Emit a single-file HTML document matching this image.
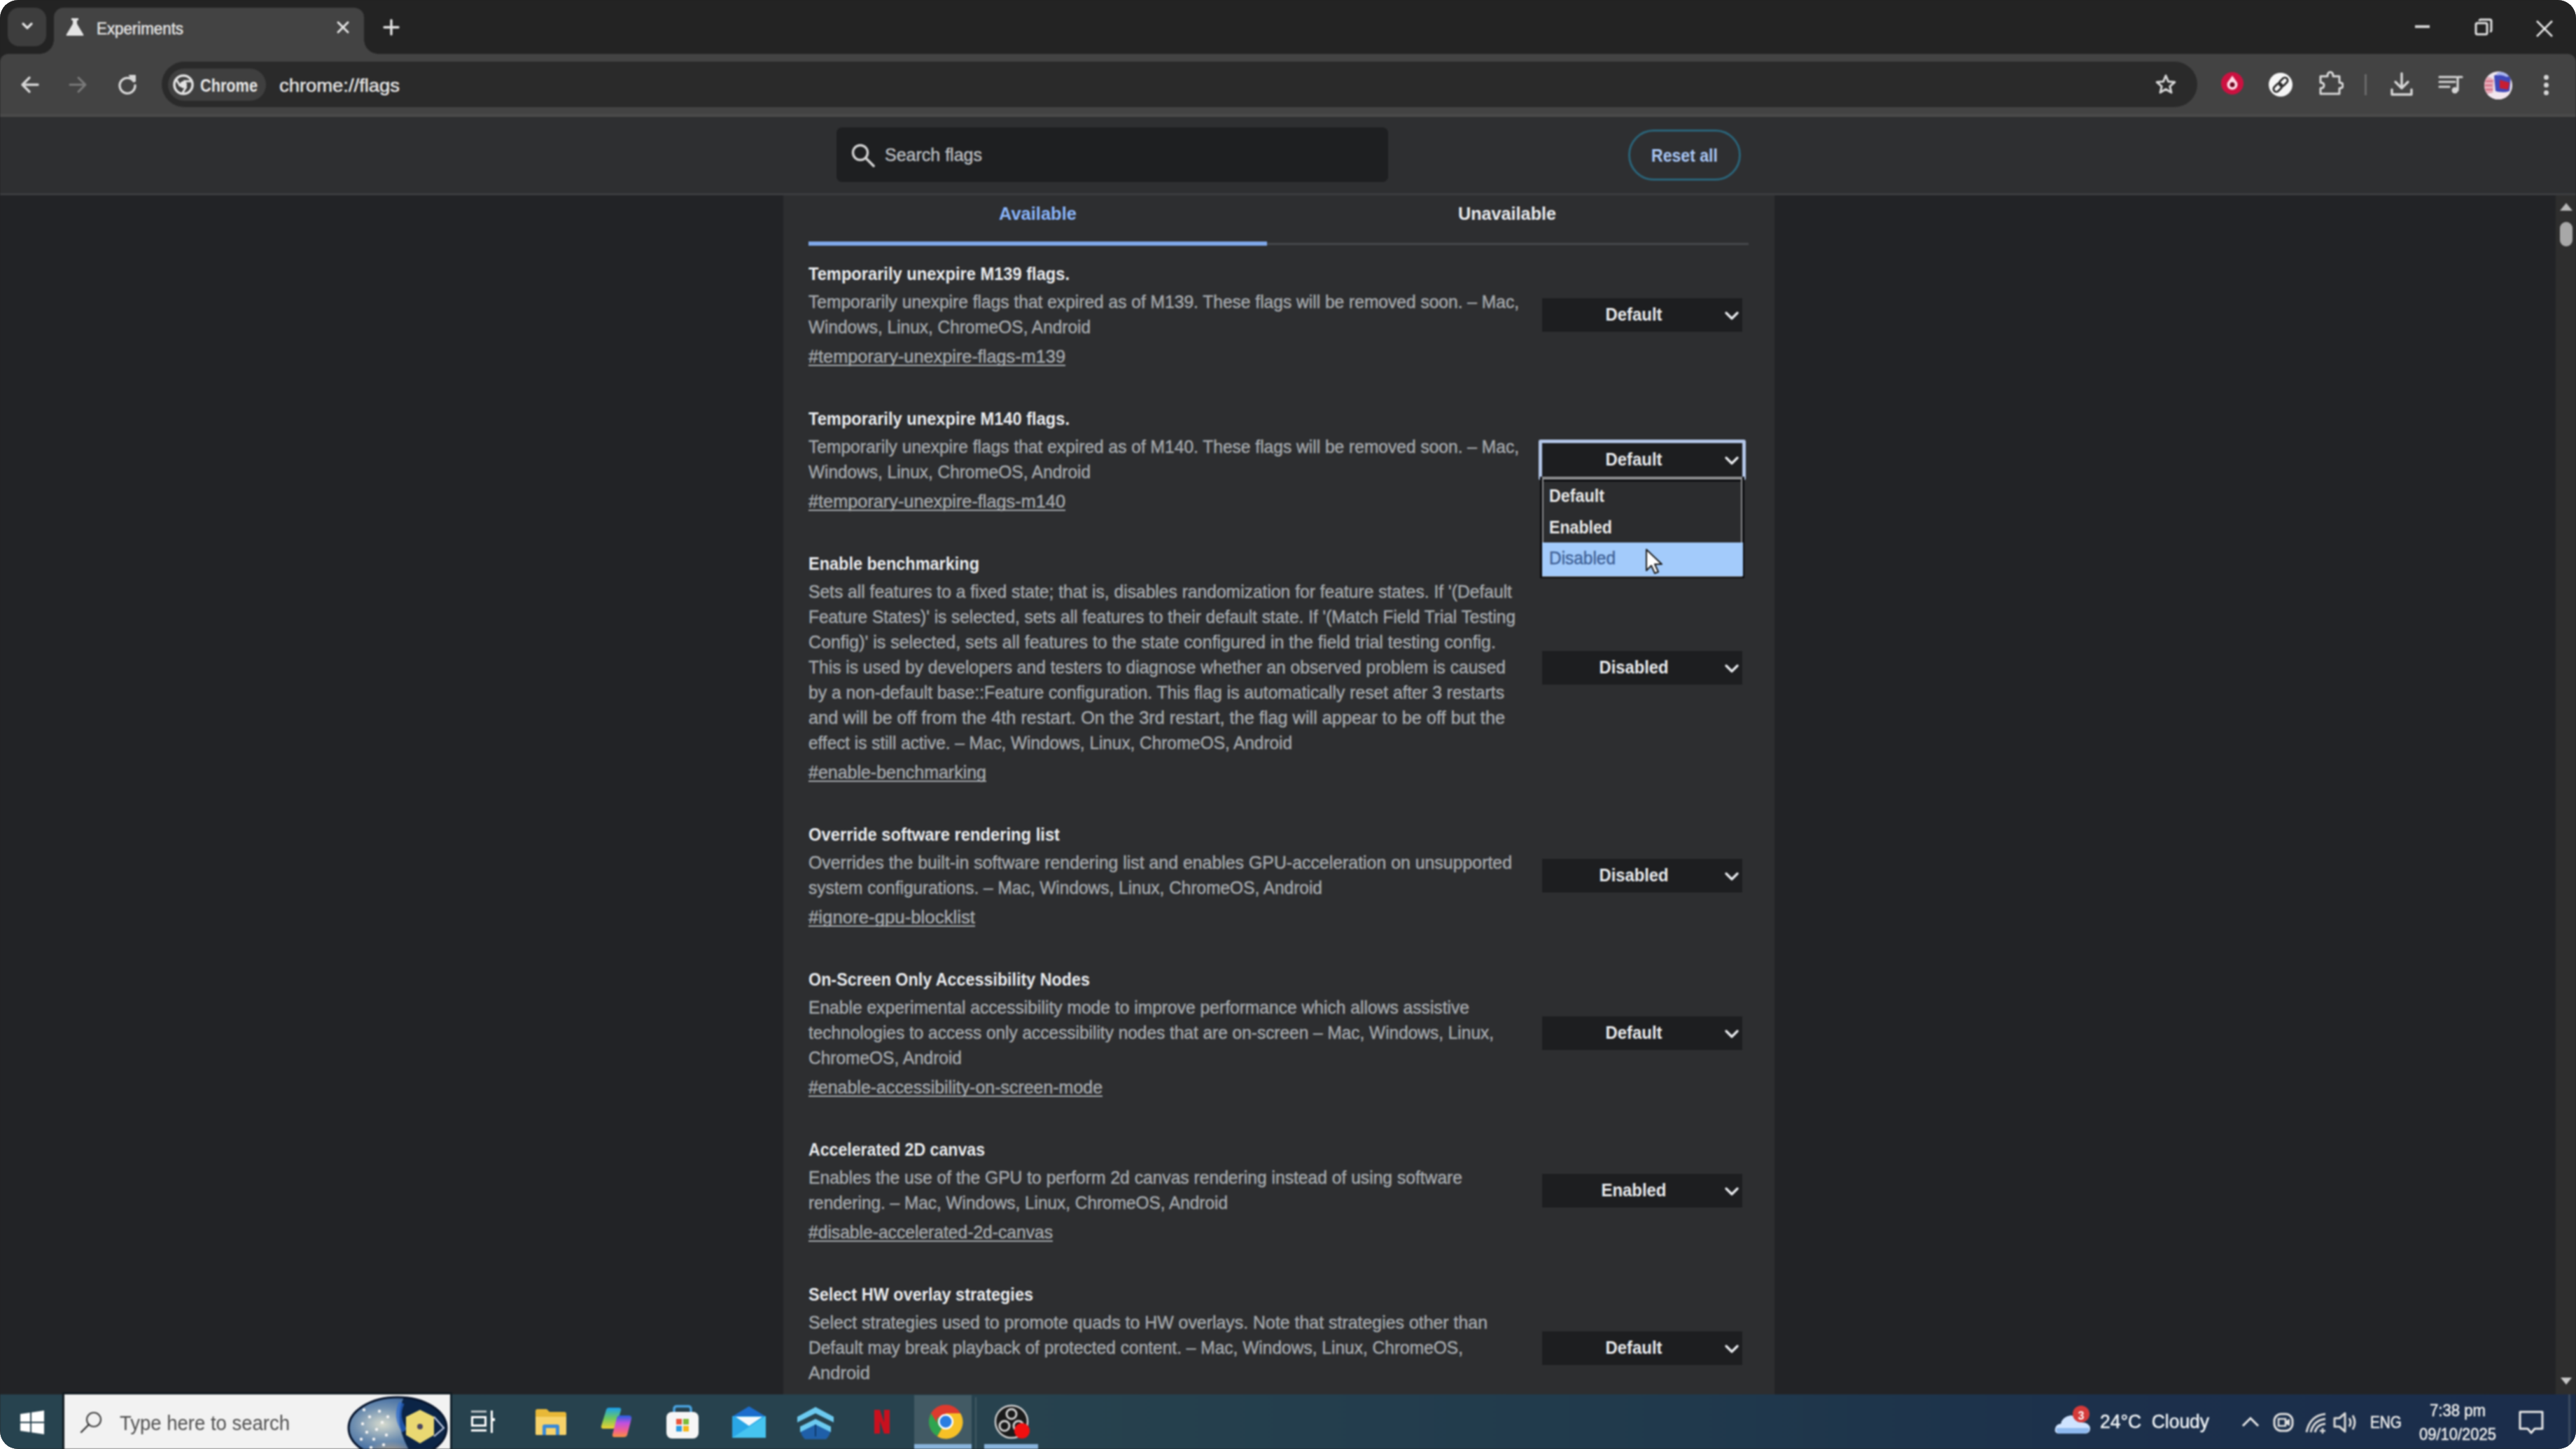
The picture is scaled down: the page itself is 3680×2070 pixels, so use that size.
<!DOCTYPE html>
<html><head><meta charset="utf-8"><title>Experiments</title>
<style>
html,body{margin:0;padding:0;background:#ffffff;width:3680px;height:2070px;overflow:hidden;}
#scr{position:absolute;left:0;top:0;width:3680px;height:2070px;overflow:hidden;border-radius:26px;background:#232323;}
#bl{position:absolute;left:0;top:0;width:3680px;height:2070px;filter:blur(1px);}
.b{position:absolute;}
.t{position:absolute;white-space:nowrap;font-family:"Liberation Sans",sans-serif;}
</style></head><body><div id="scr"><div id="bl">
<div class="b" style="left:0px;top:0px;width:3680px;height:92px;background:#232323;"></div>
<div class="b" style="left:11px;top:11px;width:55px;height:55px;background:#3d3d3d;border-radius:16px;"></div>
<svg class="b" style="left:24px;top:22px;" width="30" height="30" viewBox="0 0 30 30"><path d="M9 12 L15 18 L21 12" fill="none" stroke="#e3e3e3" stroke-width="3.2" stroke-linecap="round" stroke-linejoin="round"/></svg>
<div class="b" style="left:77px;top:11px;width:443px;height:69px;background:#434343;border-radius:14px 14px 0 0;"></div>
<div class="b" style="left:57px;top:57px;width:20px;height:20px;background:radial-gradient(circle at 0 0, transparent 19.5px, #434343 20px);"></div>
<div class="b" style="left:520px;top:57px;width:20px;height:20px;background:radial-gradient(circle at 100% 0, transparent 19.5px, #434343 20px);"></div>
<svg class="b" style="left:93px;top:24px;" width="28" height="28" viewBox="0 0 28 28"><path d="M9 2 H19 V5 H17 V10 L26 25 Q27 27 25 27 H3 Q1 27 2 25 L11 10 V5 H9 Z" fill="#e3e3e3"/></svg>
<div class="t " style="left:138px;top:28.23px;font-size:23px;line-height:27.6px;font-weight:400;color:#e3e3e3;transform:scaleX(0.9703);transform-origin:left top;-webkit-text-stroke:0.5px currentColor;">Experiments</div>
<svg class="b" style="left:480px;top:29px;" width="20" height="20" viewBox="0 0 20 20"><path d="M3 3 L17 17 M17 3 L3 17" stroke="#e3e3e3" stroke-width="3" stroke-linecap="round"/></svg>
<svg class="b" style="left:547px;top:27px;" width="24" height="24" viewBox="0 0 24 24"><path d="M12 2 V22 M2 12 H22" stroke="#e3e3e3" stroke-width="3.4" stroke-linecap="round"/></svg>
<div class="b" style="left:3450px;top:36px;width:21px;height:4px;background:#cfcfcf;"></div>
<svg class="b" style="left:3534px;top:25px;" width="28" height="28" viewBox="0 0 28 28"><rect x="3" y="8" width="16" height="16" rx="2" fill="none" stroke="#e0e0e0" stroke-width="3"/><path d="M8 5 Q8 3 10 3 H23 Q25 3 25 5 V18 Q25 20 23 20" fill="none" stroke="#e0e0e0" stroke-width="3"/></svg>
<svg class="b" style="left:3622px;top:28px;" width="26" height="26" viewBox="0 0 26 26"><path d="M2 2 L24 24 M24 2 L2 24" stroke="#e6e6e6" stroke-width="2.6"/></svg>
<div class="b" style="left:0px;top:77px;width:3680px;height:88px;background:#434343;border-radius:12px 12px 0 0;"></div>
<div class="b" style="left:0px;top:163px;width:3680px;height:4px;background:#4a4a4a;"></div>
<svg class="b" style="left:28px;top:106px;" width="30" height="30" viewBox="0 0 30 30"><path d="M26 15 H5 M14 5 L4 15 L14 25" fill="none" stroke="#d6d6d6" stroke-width="3.4" stroke-linecap="round" stroke-linejoin="round"/></svg>
<svg class="b" style="left:96px;top:106px;" width="30" height="30" viewBox="0 0 30 30"><path d="M4 15 H25 M16 5 L26 15 L16 25" fill="none" stroke="#7a7a7a" stroke-width="3" stroke-linecap="round" stroke-linejoin="round"/></svg>
<svg class="b" style="left:166px;top:105px;" width="32" height="32" viewBox="0 0 32 32"><path d="M25 11 A11 11 0 1 0 27 17" fill="none" stroke="#d6d6d6" stroke-width="3.4" stroke-linecap="round"/><path d="M19 3 H27 V11 Z" fill="#d6d6d6" stroke="#d6d6d6" stroke-width="2" stroke-linejoin="round"/></svg>
<div class="b" style="left:231px;top:88px;width:2908px;height:65px;background:#2a2a2a;border-radius:33px;"></div>
<div class="b" style="left:240px;top:98px;width:140px;height:46px;background:#3f3f3f;border-radius:23px;"></div>
<svg class="b" style="left:246px;top:105px;" width="32" height="32" viewBox="0 0 32 32"><circle cx="16" cy="16" r="13" fill="none" stroke="#e3e3e3" stroke-width="3.5"/><circle cx="16" cy="16" r="5" fill="#e3e3e3"/><path d="M16 11 H28 M11.7 18.5 L5.5 8 M20.3 18.5 L14 29" stroke="#e3e3e3" stroke-width="3"/></svg>
<div class="t " style="left:286px;top:107.34px;font-size:25px;line-height:30.0px;font-weight:700;color:#e8e8e8;transform:scaleX(0.8677);transform-origin:left top;">Chrome</div>
<div class="t " style="left:399px;top:107.34px;font-size:25px;line-height:30.0px;font-weight:400;color:#e3e3e3;transform:scaleX(1.0955);transform-origin:left top;-webkit-text-stroke:0.5px currentColor;">chrome://flags</div>
<svg class="b" style="left:3078px;top:105px;" width="32" height="32" viewBox="0 0 32 32"><path d="M16 3 L19.6 11.6 L28.8 12.3 L21.8 18.3 L24 27.3 L16 22.4 L8 27.3 L10.2 18.3 L3.2 12.3 L12.4 11.6 Z" fill="none" stroke="#d6d6d6" stroke-width="3" stroke-linejoin="round"/></svg>
<svg class="b" style="left:3172px;top:102px;" width="34" height="34" viewBox="0 0 34 34"><circle cx="17" cy="17" r="16" fill="#cc1140"/><path d="M17 6 L24 16 A7.5 7.5 0 1 1 10 16 Z" fill="#ffd8e4"/><circle cx="17" cy="19" r="3.5" fill="#6a0a22"/></svg>
<svg class="b" style="left:3240px;top:103px;" width="36" height="36" viewBox="0 0 36 36"><circle cx="18" cy="18" r="17" fill="#f6f6f6"/><rect x="7" y="18" width="14" height="8" rx="4" transform="rotate(-45 14 22)" fill="none" stroke="#2a2a2a" stroke-width="2.8"/><rect x="15" y="10" width="14" height="8" rx="4" transform="rotate(-45 22 14)" fill="none" stroke="#2a2a2a" stroke-width="2.8"/></svg>
<svg class="b" style="left:3310px;top:100px;" width="38" height="38" viewBox="0 0 38 38"><path d="M5 9 H15 Q15 3 19 3 Q23 3 23 9 H32 V18 Q37 18 37 22 Q37 26 32 26 V34 H5 V26 Q10 26 10 22 Q10 18 5 18 Z" fill="none" stroke="#d8d8d8" stroke-width="3" stroke-linejoin="round"/></svg>
<div class="b" style="left:3378px;top:106px;width:3px;height:30px;background:#6a6a6a;"></div>
<svg class="b" style="left:3413px;top:102px;" width="36" height="38" viewBox="0 0 36 38"><path d="M18 3 V23 M9 15 L18 24 L27 15" fill="none" stroke="#d6d6d6" stroke-width="3.4" stroke-linecap="round" stroke-linejoin="round"/><path d="M4 26 V33 H32 V26" fill="none" stroke="#d6d6d6" stroke-width="3.4" stroke-linecap="round" stroke-linejoin="round"/></svg>
<svg class="b" style="left:3483px;top:104px;" width="36" height="34" viewBox="0 0 36 34"><path d="M2 6 H26 M2 13 H24 M2 20 H16" stroke="#d6d6d6" stroke-width="3.2" stroke-linecap="round"/><path d="M28 6 H34 M28 6 V25" stroke="#d6d6d6" stroke-width="3.2" stroke-linecap="round"/><circle cx="24" cy="25" r="4.5" fill="#d6d6d6"/></svg>
<svg class="b" style="left:3547px;top:100px;" width="44" height="44" viewBox="0 0 44 44"><defs><clipPath id="av"><circle cx="22" cy="22" r="20"/></clipPath></defs><g clip-path="url(#av)"><rect width="44" height="44" fill="#ece4ec"/><path d="M0 10 Q8 8 16 14 L14 34 Q6 36 0 34 Z" fill="#e6aab8"/><path d="M4 16 H14 M3 22 H13 M4 28 H14" stroke="#d06a80" stroke-width="2"/><path d="M16 8 Q28 2 40 10 L38 30 Q28 34 18 30 Z" fill="#4048b8"/><path d="M24 14 L38 18 L36 28 L24 26 Z" fill="#c81e32"/><path d="M20 4 Q30 0 40 8 L34 10 Q26 6 20 8 Z" fill="#a8b4f0"/><path d="M0 36 Q22 28 44 34 V44 H0 Z" fill="#f2e6ee"/></g></svg>
<div class="b" style="left:3634px;top:107px;width:7px;height:7px;border-radius:50%;background:#d6d6d6;"></div>
<div class="b" style="left:3634px;top:118px;width:7px;height:7px;border-radius:50%;background:#d6d6d6;"></div>
<div class="b" style="left:3634px;top:129px;width:7px;height:7px;border-radius:50%;background:#d6d6d6;"></div>
<div class="b" style="left:0px;top:167px;width:3680px;height:1825px;background:#222326;"></div>
<div class="b" style="left:0px;top:167px;width:3680px;height:110px;background:#2e2f31;"></div>
<div class="b" style="left:0px;top:276px;width:3680px;height:3px;background:#3b3c3f;"></div>
<div class="b" style="left:1119px;top:279px;width:1416px;height:1713px;background:#2d2e30;"></div>
<div class="b" style="left:1195px;top:182px;width:788px;height:78px;background:#1e1f21;border-radius:8px;"></div>
<svg class="b" style="left:1214px;top:203px;" width="40" height="40" viewBox="0 0 40 40"><circle cx="15" cy="15" r="10.5" fill="none" stroke="#d0d0d0" stroke-width="3.4"/><path d="M23 23 L34 34" stroke="#d0d0d0" stroke-width="3.8" stroke-linecap="round"/></svg>
<div class="t " style="left:1264px;top:207.42px;font-size:24.92px;line-height:29.9px;font-weight:400;color:#b8bbbf;transform:scaleX(1.0036);transform-origin:left top;-webkit-text-stroke:0.5px currentColor;">Search flags</div>
<div class="b" style="left:2326px;top:185px;width:161px;height:73px;background:transparent;border:3px solid #2b6479;border-radius:37px;box-sizing:border-box;"></div>
<div class="t " style="left:2359px;top:208.42px;font-size:24.92px;line-height:29.9px;font-weight:700;color:#a9c6f4;transform:scaleX(0.9268);transform-origin:left top;">Reset all</div>
<div class="t " style="left:1427px;top:291.42px;font-size:24.92px;line-height:29.9px;font-weight:700;color:#8ab4f8;transform:scaleX(1.0230);transform-origin:left top;">Available</div>
<div class="t " style="left:2083px;top:291.42px;font-size:24.92px;line-height:29.9px;font-weight:700;color:#e8eaed;transform:scaleX(1.0116);transform-origin:left top;">Unavailable</div>
<div class="b" style="left:1155px;top:347px;width:1343px;height:3px;background:#45474a;"></div>
<div class="b" style="left:1155px;top:345px;width:655px;height:6px;background:#7fa8ea;"></div>
<div class="b" style="left:3651px;top:279px;width:29px;height:1713px;background:#2e2e2e;"></div>
<svg class="b" style="left:3656px;top:289px;" width="20" height="13" viewBox="0 0 20 13"><path d="M1 12 L10 1 L19 12 Z" fill="#b8b8b8"/></svg>
<div class="b" style="left:3657px;top:317px;width:18px;height:35px;background:#a8a8a8;border-radius:10px;"></div>
<svg class="b" style="left:3656px;top:1966px;" width="20" height="16" viewBox="0 0 20 16"><path d="M2 2 L10 12 L18 2 Z" fill="#c8c8c8"/></svg>
<div class="t " style="left:1155px;top:377.42px;font-size:24.92px;line-height:29.9px;font-weight:700;color:#e8eaed;transform:scaleX(0.9500);transform-origin:left top;">Temporarily unexpire M139 flags.</div>
<div class="t " style="left:1155px;top:417.42px;font-size:24.92px;line-height:29.9px;font-weight:400;color:#a3a7ab;transform:scaleX(0.9859);transform-origin:left top;-webkit-text-stroke:0.5px currentColor;">Temporarily unexpire flags that expired as of M139. These flags will be removed soon. – Mac,</div>
<div class="t " style="left:1155px;top:453.42px;font-size:24.92px;line-height:29.9px;font-weight:400;color:#a3a7ab;transform:scaleX(0.9802);transform-origin:left top;-webkit-text-stroke:0.5px currentColor;">Windows, Linux, ChromeOS, Android</div>
<div class="t " style="left:1155px;top:495.42px;font-size:24.92px;line-height:29.9px;font-weight:400;color:#a3a7ab;transform:scaleX(1.0157);transform-origin:left top;-webkit-text-stroke:0.5px currentColor;">#temporary-unexpire-flags-m139</div>
<div class="b" style="left:1155px;top:521px;width:367px;height:2px;background:#a3a7ab;"></div>
<div class="b" style="left:2203px;top:426px;width:286px;height:48px;background:#1d1e20;"></div>
<div class="t " style="left:1334px;width:2000px;text-align:center;top:435.42px;font-size:24.92px;line-height:29.9px;font-weight:700;color:#e8eaed;transform:scaleX(0.9595);transform-origin:center top;">Default</div>
<svg class="b" style="left:2463px;top:443px;" width="22" height="16" viewBox="0 0 22 16"><path d="M3 4 L11 12 L19 4" fill="none" stroke="#e8eaed" stroke-width="3.4" stroke-linecap="round" stroke-linejoin="round"/></svg>
<div class="t " style="left:1155px;top:584.42px;font-size:24.92px;line-height:29.9px;font-weight:700;color:#e8eaed;transform:scaleX(0.9500);transform-origin:left top;">Temporarily unexpire M140 flags.</div>
<div class="t " style="left:1155px;top:624.42px;font-size:24.92px;line-height:29.9px;font-weight:400;color:#a3a7ab;transform:scaleX(0.9859);transform-origin:left top;-webkit-text-stroke:0.5px currentColor;">Temporarily unexpire flags that expired as of M140. These flags will be removed soon. – Mac,</div>
<div class="t " style="left:1155px;top:660.42px;font-size:24.92px;line-height:29.9px;font-weight:400;color:#a3a7ab;transform:scaleX(0.9802);transform-origin:left top;-webkit-text-stroke:0.5px currentColor;">Windows, Linux, ChromeOS, Android</div>
<div class="t " style="left:1155px;top:702.42px;font-size:24.92px;line-height:29.9px;font-weight:400;color:#a3a7ab;transform:scaleX(1.0157);transform-origin:left top;-webkit-text-stroke:0.5px currentColor;">#temporary-unexpire-flags-m140</div>
<div class="b" style="left:1155px;top:728px;width:367px;height:2px;background:#a3a7ab;"></div>
<div class="b" style="left:2198px;top:628px;width:296px;height:58px;background:#b3c6e8;border-radius:3px;"></div>
<div class="b" style="left:2203px;top:633px;width:286px;height:48px;background:#1d1e20;"></div>
<div class="t " style="left:1334px;width:2000px;text-align:center;top:642.42px;font-size:24.92px;line-height:29.9px;font-weight:700;color:#e8eaed;transform:scaleX(0.9595);transform-origin:center top;">Default</div>
<svg class="b" style="left:2463px;top:650px;" width="22" height="16" viewBox="0 0 22 16"><path d="M3 4 L11 12 L19 4" fill="none" stroke="#e8eaed" stroke-width="3.4" stroke-linecap="round" stroke-linejoin="round"/></svg>
<div class="t " style="left:1155px;top:791.42px;font-size:24.92px;line-height:29.9px;font-weight:700;color:#e8eaed;transform:scaleX(0.9427);transform-origin:left top;">Enable benchmarking</div>
<div class="t " style="left:1155px;top:831.42px;font-size:24.92px;line-height:29.9px;font-weight:400;color:#a3a7ab;transform:scaleX(0.9884);transform-origin:left top;-webkit-text-stroke:0.5px currentColor;">Sets all features to a fixed state; that is, disables randomization for feature states. If '(Default</div>
<div class="t " style="left:1155px;top:867.42px;font-size:24.92px;line-height:29.9px;font-weight:400;color:#a3a7ab;transform:scaleX(0.9799);transform-origin:left top;-webkit-text-stroke:0.5px currentColor;">Feature States)' is selected, sets all features to their default state. If '(Match Field Trial Testing</div>
<div class="t " style="left:1155px;top:903.42px;font-size:24.92px;line-height:29.9px;font-weight:400;color:#a3a7ab;transform:scaleX(1.0026);transform-origin:left top;-webkit-text-stroke:0.5px currentColor;">Config)' is selected, sets all features to the state configured in the field trial testing config.</div>
<div class="t " style="left:1155px;top:939.42px;font-size:24.92px;line-height:29.9px;font-weight:400;color:#a3a7ab;transform:scaleX(0.9868);transform-origin:left top;-webkit-text-stroke:0.5px currentColor;">This is used by developers and testers to diagnose whether an observed problem is caused</div>
<div class="t " style="left:1155px;top:975.42px;font-size:24.92px;line-height:29.9px;font-weight:400;color:#a3a7ab;transform:scaleX(0.9908);transform-origin:left top;-webkit-text-stroke:0.5px currentColor;">by a non-default base::Feature configuration. This flag is automatically reset after 3 restarts</div>
<div class="t " style="left:1155px;top:1011.42px;font-size:24.92px;line-height:29.9px;font-weight:400;color:#a3a7ab;transform:scaleX(1.0161);transform-origin:left top;-webkit-text-stroke:0.5px currentColor;">and will be off from the 4th restart. On the 3rd restart, the flag will appear to be off but the</div>
<div class="t " style="left:1155px;top:1047.42px;font-size:24.92px;line-height:29.9px;font-weight:400;color:#a3a7ab;transform:scaleX(0.9775);transform-origin:left top;-webkit-text-stroke:0.5px currentColor;">effect is still active. – Mac, Windows, Linux, ChromeOS, Android</div>
<div class="t " style="left:1155px;top:1089.42px;font-size:24.92px;line-height:29.9px;font-weight:400;color:#a3a7ab;transform:scaleX(1.0024);transform-origin:left top;-webkit-text-stroke:0.5px currentColor;">#enable-benchmarking</div>
<div class="b" style="left:1155px;top:1115px;width:254px;height:2px;background:#a3a7ab;"></div>
<div class="b" style="left:2203px;top:930px;width:286px;height:48px;background:#1d1e20;"></div>
<div class="t " style="left:1334px;width:2000px;text-align:center;top:939.42px;font-size:24.92px;line-height:29.9px;font-weight:700;color:#e8eaed;transform:scaleX(0.9536);transform-origin:center top;">Disabled</div>
<svg class="b" style="left:2463px;top:947px;" width="22" height="16" viewBox="0 0 22 16"><path d="M3 4 L11 12 L19 4" fill="none" stroke="#e8eaed" stroke-width="3.4" stroke-linecap="round" stroke-linejoin="round"/></svg>
<div class="t " style="left:1155px;top:1178.42px;font-size:24.92px;line-height:29.9px;font-weight:700;color:#e8eaed;transform:scaleX(0.9536);transform-origin:left top;">Override software rendering list</div>
<div class="t " style="left:1155px;top:1218.42px;font-size:24.92px;line-height:29.9px;font-weight:400;color:#a3a7ab;transform:scaleX(0.9985);transform-origin:left top;-webkit-text-stroke:0.5px currentColor;">Overrides the built-in software rendering list and enables GPU-acceleration on unsupported</div>
<div class="t " style="left:1155px;top:1254.42px;font-size:24.92px;line-height:29.9px;font-weight:400;color:#a3a7ab;transform:scaleX(0.9819);transform-origin:left top;-webkit-text-stroke:0.5px currentColor;">system configurations. – Mac, Windows, Linux, ChromeOS, Android</div>
<div class="t " style="left:1155px;top:1296.42px;font-size:24.92px;line-height:29.9px;font-weight:400;color:#a3a7ab;transform:scaleX(1.0356);transform-origin:left top;-webkit-text-stroke:0.5px currentColor;">#ignore-gpu-blocklist</div>
<div class="b" style="left:1155px;top:1322px;width:238px;height:2px;background:#a3a7ab;"></div>
<div class="b" style="left:2203px;top:1227px;width:286px;height:48px;background:#1d1e20;"></div>
<div class="t " style="left:1334px;width:2000px;text-align:center;top:1236.42px;font-size:24.92px;line-height:29.9px;font-weight:700;color:#e8eaed;transform:scaleX(0.9536);transform-origin:center top;">Disabled</div>
<svg class="b" style="left:2463px;top:1244px;" width="22" height="16" viewBox="0 0 22 16"><path d="M3 4 L11 12 L19 4" fill="none" stroke="#e8eaed" stroke-width="3.4" stroke-linecap="round" stroke-linejoin="round"/></svg>
<div class="t " style="left:1155px;top:1385.42px;font-size:24.92px;line-height:29.9px;font-weight:700;color:#e8eaed;transform:scaleX(0.9358);transform-origin:left top;">On-Screen Only Accessibility Nodes</div>
<div class="t " style="left:1155px;top:1425.42px;font-size:24.92px;line-height:29.9px;font-weight:400;color:#a3a7ab;transform:scaleX(0.9883);transform-origin:left top;-webkit-text-stroke:0.5px currentColor;">Enable experimental accessibility mode to improve performance which allows assistive</div>
<div class="t " style="left:1155px;top:1461.42px;font-size:24.92px;line-height:29.9px;font-weight:400;color:#a3a7ab;transform:scaleX(0.9808);transform-origin:left top;-webkit-text-stroke:0.5px currentColor;">technologies to access only accessibility nodes that are on-screen – Mac, Windows, Linux,</div>
<div class="t " style="left:1155px;top:1497.42px;font-size:24.92px;line-height:29.9px;font-weight:400;color:#a3a7ab;transform:scaleX(0.9825);transform-origin:left top;-webkit-text-stroke:0.5px currentColor;">ChromeOS, Android</div>
<div class="t " style="left:1155px;top:1539.42px;font-size:24.92px;line-height:29.9px;font-weight:400;color:#a3a7ab;transform:scaleX(1.0013);transform-origin:left top;-webkit-text-stroke:0.5px currentColor;">#enable-accessibility-on-screen-mode</div>
<div class="b" style="left:1155px;top:1565px;width:420px;height:2px;background:#a3a7ab;"></div>
<div class="b" style="left:2203px;top:1452px;width:286px;height:48px;background:#1d1e20;"></div>
<div class="t " style="left:1334px;width:2000px;text-align:center;top:1461.42px;font-size:24.92px;line-height:29.9px;font-weight:700;color:#e8eaed;transform:scaleX(0.9595);transform-origin:center top;">Default</div>
<svg class="b" style="left:2463px;top:1469px;" width="22" height="16" viewBox="0 0 22 16"><path d="M3 4 L11 12 L19 4" fill="none" stroke="#e8eaed" stroke-width="3.4" stroke-linecap="round" stroke-linejoin="round"/></svg>
<div class="t " style="left:1155px;top:1628.42px;font-size:24.92px;line-height:29.9px;font-weight:700;color:#e8eaed;transform:scaleX(0.9286);transform-origin:left top;">Accelerated 2D canvas</div>
<div class="t " style="left:1155px;top:1668.42px;font-size:24.92px;line-height:29.9px;font-weight:400;color:#a3a7ab;transform:scaleX(0.9892);transform-origin:left top;-webkit-text-stroke:0.5px currentColor;">Enables the use of the GPU to perform 2d canvas rendering instead of using software</div>
<div class="t " style="left:1155px;top:1704.42px;font-size:24.92px;line-height:29.9px;font-weight:400;color:#a3a7ab;transform:scaleX(0.9790);transform-origin:left top;-webkit-text-stroke:0.5px currentColor;">rendering. – Mac, Windows, Linux, ChromeOS, Android</div>
<div class="t " style="left:1155px;top:1746.42px;font-size:24.92px;line-height:29.9px;font-weight:400;color:#a3a7ab;transform:scaleX(0.9885);transform-origin:left top;-webkit-text-stroke:0.5px currentColor;">#disable-accelerated-2d-canvas</div>
<div class="b" style="left:1155px;top:1772px;width:349px;height:2px;background:#a3a7ab;"></div>
<div class="b" style="left:2203px;top:1677px;width:286px;height:48px;background:#1d1e20;"></div>
<div class="t " style="left:1334px;width:2000px;text-align:center;top:1686.42px;font-size:24.92px;line-height:29.9px;font-weight:700;color:#e8eaed;transform:scaleX(0.9598);transform-origin:center top;">Enabled</div>
<svg class="b" style="left:2463px;top:1694px;" width="22" height="16" viewBox="0 0 22 16"><path d="M3 4 L11 12 L19 4" fill="none" stroke="#e8eaed" stroke-width="3.4" stroke-linecap="round" stroke-linejoin="round"/></svg>
<div class="t " style="left:1155px;top:1835.42px;font-size:24.92px;line-height:29.9px;font-weight:700;color:#e8eaed;transform:scaleX(0.9426);transform-origin:left top;">Select HW overlay strategies</div>
<div class="t " style="left:1155px;top:1875.42px;font-size:24.92px;line-height:29.9px;font-weight:400;color:#a3a7ab;transform:scaleX(0.9995);transform-origin:left top;-webkit-text-stroke:0.5px currentColor;">Select strategies used to promote quads to HW overlays. Note that strategies other than</div>
<div class="t " style="left:1155px;top:1911.42px;font-size:24.92px;line-height:29.9px;font-weight:400;color:#a3a7ab;transform:scaleX(0.9846);transform-origin:left top;-webkit-text-stroke:0.5px currentColor;">Default may break playback of protected content. – Mac, Windows, Linux, ChromeOS,</div>
<div class="t " style="left:1155px;top:1947.42px;font-size:24.92px;line-height:29.9px;font-weight:400;color:#a3a7ab;transform:scaleX(1.0249);transform-origin:left top;-webkit-text-stroke:0.5px currentColor;">Android</div>
<div class="t " style="left:1155px;top:1989.42px;font-size:24.92px;line-height:29.9px;font-weight:400;color:#a3a7ab;transform:scaleX(1.1168);transform-origin:left top;-webkit-text-stroke:0.5px currentColor;">#overlay-strategies</div>
<div class="b" style="left:1155px;top:2015px;width:235px;height:2px;background:#a3a7ab;"></div>
<div class="b" style="left:2203px;top:1902px;width:286px;height:48px;background:#1d1e20;"></div>
<div class="t " style="left:1334px;width:2000px;text-align:center;top:1911.42px;font-size:24.92px;line-height:29.9px;font-weight:700;color:#e8eaed;transform:scaleX(0.9595);transform-origin:center top;">Default</div>
<svg class="b" style="left:2463px;top:1919px;" width="22" height="16" viewBox="0 0 22 16"><path d="M3 4 L11 12 L19 4" fill="none" stroke="#e8eaed" stroke-width="3.4" stroke-linecap="round" stroke-linejoin="round"/></svg>
<div class="b" style="left:2200px;top:681px;width:292px;height:145px;background:#0c0d10;"></div>
<div class="b" style="left:2203px;top:681px;width:286px;height:143px;background:#2b2c2e;border:2px solid #8e8f91;border-top:4px solid #8e8f91;box-sizing:border-box;"></div>
<div class="b" style="left:2205px;top:685px;width:282px;height:3px;background:#0c0d10;"></div>
<div class="t " style="left:2213px;top:693.39px;font-size:26px;line-height:31.2px;font-weight:700;color:#e8e8e8;transform:scaleX(0.8965);transform-origin:left top;">Default</div>
<div class="t " style="left:2213px;top:738.39px;font-size:26px;line-height:31.2px;font-weight:700;color:#e8e8e8;transform:scaleX(0.8899);transform-origin:left top;">Enabled</div>
<div class="b" style="left:2203px;top:775px;width:287px;height:48px;background:#a3cbfb;"></div>
<div class="t " style="left:2213px;top:782.39px;font-size:26px;line-height:31.2px;font-weight:400;color:#42649a;transform:scaleX(0.9390);transform-origin:left top;-webkit-text-stroke:0.5px currentColor;">Disabled</div>
<svg class="b" style="left:2348px;top:782px;" width="30" height="42" viewBox="0 0 30 42"><path d="M4 3 V33 L11 26 L16 37 L21 35 L16 24 H26 Z" fill="#ffffff" stroke="#1a1a1a" stroke-width="2" stroke-linejoin="round"/></svg>
<div class="b" style="left:0px;top:1992px;width:3680px;height:78px;background:linear-gradient(90deg,#27434f 0%,#27424e 40%,#20394c 66%,#1c304b 82%,#1b2d4b 100%);"></div>
<svg class="b" style="left:28px;top:2015px;" width="36" height="34" viewBox="0 0 36 34"><path d="M1 5 L15 3 V16 H1 Z M17 2.7 L35 0 V16 H17 Z M1 18 H15 V31 L1 29 Z M17 18 H35 V34 L17 31.3 Z" fill="#ffffff"/></svg>
<div class="b" style="left:89px;top:1989px;width:557px;height:81px;background:#111a20;"></div>
<div class="b" style="left:92px;top:1992px;width:551px;height:78px;background:#f2f2f2;"></div>
<svg class="b" style="left:113px;top:2014px;" width="36" height="36" viewBox="0 0 36 36"><circle cx="21" cy="14" r="10" fill="none" stroke="#444444" stroke-width="2.2"/><path d="M14 21 L3 32" stroke="#333333" stroke-width="2.4" stroke-linecap="round"/></svg>
<div class="t " style="left:171px;top:2015.55px;font-size:29px;line-height:34.8px;font-weight:400;color:#505050;transform:scaleX(0.9480);transform-origin:left top;">Type here to search</div>
<svg class="b" style="left:494px;top:1994px;" width="150" height="76" viewBox="0 0 150 76"><defs><radialGradient id="gx" cx="0.35" cy="0.45" r="0.6"><stop offset="0" stop-color="#d8dccf"/><stop offset="0.45" stop-color="#6f8fb0"/><stop offset="1" stop-color="#1d4f96"/></radialGradient><radialGradient id="go" cx="0.5" cy="1" r="0.5"><stop offset="0" stop-color="#f6c07a"/><stop offset="1" stop-color="#f6c07a" stop-opacity="0"/></radialGradient><clipPath id="ec"><ellipse cx="74" cy="46" rx="70" ry="44"/></clipPath></defs><g clip-path="url(#ec)"><rect width="150" height="90" fill="url(#gx)"/><rect x="20" y="40" width="90" height="50" fill="url(#go)"/><path d="M84 0 Q64 40 98 90 H150 V0 Z" fill="#0b2446"/><path d="M80 10 Q70 30 84 50" stroke="#2a6ad0" stroke-width="8" fill="none" opacity="0.7"/><circle cx="26" cy="20" r="2.2" fill="#f4f4f4"/><circle cx="34" cy="30" r="2.2" fill="#f4f4f4"/><circle cx="24" cy="40" r="2.2" fill="#f4f4f4"/><circle cx="30" cy="52" r="2.2" fill="#f4f4f4"/><circle cx="40" cy="62" r="2.2" fill="#f4f4f4"/><circle cx="22" cy="62" r="2.2" fill="#f4f4f4"/><circle cx="48" cy="22" r="2.2" fill="#f4f4f4"/><circle cx="52" cy="38" r="2.2" fill="#f4f4f4"/><circle cx="44" cy="48" r="2.2" fill="#f4f4f4"/><circle cx="58" cy="56" r="2.2" fill="#f4f4f4"/><circle cx="54" cy="70" r="2.2" fill="#f4f4f4"/><circle cx="36" cy="74" r="2.2" fill="#f4f4f4"/><circle cx="60" cy="30" r="2.2" fill="#f4f4f4"/><path d="M106 20 L126 30 L126 56 L106 68 L86 56 L86 30 Z" fill="#ead872"/><circle cx="106" cy="44" r="4" fill="#4a4660"/><path d="M126 30 L140 46 L126 58" stroke="#c8d0e8" stroke-width="2" fill="none"/></g><ellipse cx="74" cy="46" rx="70" ry="44" fill="none" stroke="#08162e" stroke-width="3"/></svg>
<div class="b" style="left:643px;top:1992px;width:3px;height:78px;background:#10202a;"></div>
<svg class="b" style="left:672px;top:2014px;" width="38" height="34" viewBox="0 0 38 34"><rect x="1" y="1" width="22" height="3" fill="#b8c0c4"/><rect x="2.5" y="10.5" width="19" height="12" fill="none" stroke="#ffffff" stroke-width="3"/><rect x="1" y="28" width="22" height="3" fill="#ffffff"/><rect x="29" y="1" width="3" height="32" fill="#ffffff"/><rect x="29" y="12" width="6" height="4" fill="#ffffff"/></svg>
<svg class="b" style="left:763px;top:2010px;" width="48" height="42" viewBox="0 0 48 42"><path d="M2 6 Q2 3 5 3 H18 L22 7 H43 Q46 7 46 10 V38 Q46 40 43 40 H5 Q2 40 2 38 Z" fill="#e8b838"/><path d="M2 14 H46 V38 Q46 40 43 40 H5 Q2 40 2 38 Z" fill="#f7d26a"/><path d="M12 40 V28 Q12 25 15 25 H33 Q36 25 36 28 V40 H31 V30 H17 V40 Z" fill="#3a8ad8"/></svg>
<svg class="b" style="left:856px;top:2008px;" width="50" height="48" viewBox="0 0 50 48"><defs><linearGradient id="cpl" x1="0" y1="0" x2="0" y2="1"><stop offset="0" stop-color="#1aa0f0"/><stop offset="0.5" stop-color="#6cc860"/><stop offset="1" stop-color="#f0d030"/></linearGradient><linearGradient id="cpr" x1="0" y1="0" x2="0" y2="1"><stop offset="0" stop-color="#2060e0"/><stop offset="0.35" stop-color="#c050e0"/><stop offset="0.7" stop-color="#f06090"/><stop offset="1" stop-color="#f89040"/></linearGradient></defs><path d="M14 3 H28 Q32 3 31 7 L24 30 Q23 33 19 33 H6 Q2 33 3 29 L10 6 Q11 3 14 3 Z" fill="url(#cpl)"/><path d="M30 14 H42 Q47 14 46 19 L40 42 Q39 45 35 45 H22 Q18 45 19 41 L25 18 Q26 14 30 14 Z" fill="url(#cpr)"/></svg>
<svg class="b" style="left:949px;top:2007px;" width="52" height="50" viewBox="0 0 52 50"><path d="M14 10 V6 Q14 2 18 2 H34 Q38 2 38 6 V10" fill="none" stroke="#4aa3e0" stroke-width="3.5"/><rect x="3" y="10" width="46" height="38" rx="8" fill="#f6f6f6"/><rect x="17" y="20" width="8" height="8" fill="#e8553a"/><rect x="27" y="20" width="8" height="8" fill="#7cbb38"/><rect x="17" y="30" width="8" height="8" fill="#2a9ae0"/><rect x="27" y="30" width="8" height="8" fill="#f5b71a"/></svg>
<svg class="b" style="left:1043px;top:2008px;" width="54" height="48" viewBox="0 0 54 48"><path d="M4 15 L27 1 L50 15 Z" fill="#1b6ccc"/><rect x="3" y="15" width="48" height="31" fill="#2aa6e6"/><path d="M3 46 L51 15 V46 Z" fill="#46c4f0"/><path d="M8 16 H46 L27 29 Z" fill="#f4f8fc"/></svg>
<svg class="b" style="left:1137px;top:2008px;" width="56" height="48" viewBox="0 0 56 48"><path d="M6 32 A22 22 0 0 0 50 32 L28 22 Z" fill="#1f5fa8"/><path d="M2 16 L28 2 L54 16 L54 24 L28 11 L2 24 Z" fill="#6ccaf0"/><path d="M6 30 L28 19 L50 30 L50 38 L28 27 L6 38 Z" fill="#6ccaf0"/><path d="M28 27 V44" stroke="#0e3a6a" stroke-width="2"/></svg>
<svg class="b" style="left:1246px;top:2012px;" width="28" height="38" viewBox="0 0 28 38"><path d="M3 2 H11 L17 20 V2 H25 V36 H17 L11 18 V36 H3 Z" fill="#c8101e"/></svg>
<div class="b" style="left:1306px;top:1993px;width:82px;height:77px;background:rgba(255,255,255,0.13);"></div>
<div class="b" style="left:1393px;top:1996px;width:2px;height:74px;background:rgba(255,255,255,0.12);"></div>
<div class="b" style="left:1306px;top:2063px;width:82px;height:7px;background:#89b4dc;"></div>
<svg class="b" style="left:1326px;top:2006px;" width="50" height="50" viewBox="0 0 50 50"><circle cx="25" cy="25" r="24" fill="#dd3a2e"/><path d="M25 25 L4.2 13 A24 24 0 0 0 13 46 Z" fill="#2ea44f"/><path d="M25 25 L13 46 A24 24 0 0 0 46 13 L25 13 Z" fill="#f6c026"/><path d="M25 13 H46 A24 24 0 0 0 4.2 13 L15 31 A11 11 0 0 1 25 13 Z" fill="#dd3a2e"/><circle cx="25" cy="25" r="11" fill="#ffffff"/><circle cx="25" cy="25" r="8.5" fill="#2a7de1"/></svg>
<div class="b" style="left:1406px;top:2063px;width:77px;height:7px;background:#89b4dc;"></div>
<svg class="b" style="left:1420px;top:2006px;" width="54" height="52" viewBox="0 0 54 52"><circle cx="25" cy="25" r="23" fill="#1a1a1a" stroke="#d0d0d0" stroke-width="2.5"/><circle cx="25" cy="14" r="7" fill="none" stroke="#cfcfcf" stroke-width="3"/><circle cx="15" cy="31" r="7" fill="none" stroke="#cfcfcf" stroke-width="3"/><circle cx="35" cy="31" r="7" fill="none" stroke="#cfcfcf" stroke-width="3"/><circle cx="40" cy="38" r="11" fill="#f01010"/></svg>
<svg class="b" style="left:2934px;top:2008px;" width="56" height="44" viewBox="0 0 56 44"><path d="M8 40 Q0 40 2 32 Q4 26 10 26 Q12 16 24 14 Q36 14 40 24 Q50 24 52 32 Q52 40 44 40 Z" fill="#cfe3ff"/><path d="M8 40 Q2 38 4 32 H50 Q52 38 44 40 Z" fill="#8fbaf0"/></svg>
<div class="b" style="left:2961px;top:2008px;width:24px;height:24px;border-radius:50%;background:#d43a3a;"></div>
<div class="t " style="left:1973px;width:2000px;text-align:center;top:2012.86px;font-size:16px;line-height:19.2px;font-weight:700;color:#ffffff;">3</div>
<div class="t " style="left:3000px;top:2015.44px;font-size:27px;line-height:32.4px;font-weight:400;color:#eef2f6;transform:scaleX(0.9787);transform-origin:left top;-webkit-text-stroke:0.5px currentColor;">24°C&nbsp;&nbsp;Cloudy</div>
<svg class="b" style="left:3200px;top:2020px;" width="30" height="22" viewBox="0 0 30 22"><path d="M4 17 L15 6 L26 17" fill="none" stroke="#e8e8e8" stroke-width="3"/></svg>
<svg class="b" style="left:3246px;top:2012px;" width="32" height="40" viewBox="0 0 32 40"><rect x="3" y="8" width="26" height="24" rx="10" fill="none" stroke="#e0e0e0" stroke-width="3"/><rect x="9" y="15" width="10" height="10" fill="none" stroke="#e0e0e0" stroke-width="2.5"/><path d="M19 18 L25 15 V25 L19 22" fill="#e0e0e0"/></svg>
<svg class="b" style="left:3292px;top:2014px;" width="32" height="36" viewBox="0 0 32 36"><path d="M3 32 Q8 8 30 6 M9 32 Q13 15 30 13 M15 32 Q18 21 30 20" fill="none" stroke="#d8d8d8" stroke-width="3"/><path d="M22 30 H30 M26 26 V34" stroke="#d8d8d8" stroke-width="2.5"/></svg>
<svg class="b" style="left:3332px;top:2014px;" width="40" height="36" viewBox="0 0 40 36"><path d="M3 12 H10 L18 5 V31 L10 24 H3 Z" fill="none" stroke="#d8d8d8" stroke-width="3" stroke-linejoin="round"/><path d="M24 12 Q28 18 24 24 M29 8 Q35 18 29 28" fill="none" stroke="#d8d8d8" stroke-width="3"/></svg>
<div class="t " style="left:3386px;top:2018.28px;font-size:24px;line-height:28.8px;font-weight:400;color:#eeeeee;transform:scaleX(0.8651);transform-origin:left top;-webkit-text-stroke:0.5px currentColor;">ENG</div>
<div class="t " style="left:2511px;width:2000px;text-align:center;top:2001.28px;font-size:24px;line-height:28.8px;font-weight:400;color:#eeeeee;transform:scaleX(0.9225);transform-origin:center top;-webkit-text-stroke:0.5px currentColor;">7:38 pm</div>
<div class="t " style="left:2511px;width:2000px;text-align:center;top:2035.28px;font-size:24px;line-height:28.8px;font-weight:400;color:#eeeeee;transform:scaleX(0.9157);transform-origin:center top;-webkit-text-stroke:0.5px currentColor;">09/10/2025</div>
<svg class="b" style="left:3597px;top:2013px;" width="40" height="38" viewBox="0 0 40 38"><path d="M3 4 H35 V28 H24 L19 34 L14 28 H3 Z" fill="none" stroke="#e8e8e8" stroke-width="3" stroke-linejoin="round"/></svg>
<div class="b" style="left:3669px;top:1992px;width:3px;height:78px;background:#3a4a5e;"></div>
</div></div></body></html>
